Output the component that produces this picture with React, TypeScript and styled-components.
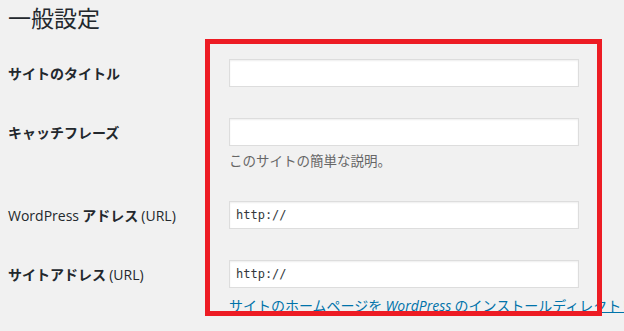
import React from "react";
import styled, { createGlobalStyle } from "styled-components";

const GlobalStyle = createGlobalStyle`
  html, body {
    margin: 0;
    padding: 0;
    background: #f1f1f1;
    overflow: hidden;
  }
  body {
    font-family: "Noto Sans CJK JP", "Noto Sans", sans-serif;
    color: #23282d;
  }
`

const Page = styled.div`
  position: relative;
  width: 624px;
  height: 331px;
  padding: 3px 0 0 8px;
  box-sizing: border-box;
  overflow: hidden;
`

const Title = styled.h1`
  margin: 0 0 12px;
  font-size: 23px;
  line-height: 29px;
  font-weight: 400;
  color: #23282d;
`

const Row = styled.div`
  display: flex;
  align-items: flex-start;
  padding: 15px 0 16px;
`

const Label = styled.label`
  width: 221px;
  flex: none;
  height: 28px;
  line-height: 28px;
  font-size: 14px;
  font-weight: 700;
  color: #23282d;
  white-space: nowrap;
`

const Latin = styled.span`
  font-family: "Open Sans", "Noto Sans", sans-serif;
  font-weight: 400;
`

const Field = styled.div`
  display: flex;
  flex-direction: column;
  align-items: flex-start;
`

const TextInput = styled.input<{ mono?: boolean }>`
  width: 350px;
  height: 28px;
  box-sizing: border-box;
  margin: 0;
  padding: 0 6px;
  border: 1px solid #ddd;
  box-shadow: inset 0 1px 2px rgba(0, 0, 0, 0.07);
  background: #fff;
  color: #32373c;
  font-size: ${p => p.mono ? 12 : 14}px;
  font-family: ${p => p.mono ? `"DejaVu Sans Mono", "Liberation Mono", monospace` : `"Noto Sans CJK JP", sans-serif`};
  outline: none;
`

const Description = styled.p<{ gap?: number; size?: number }>`
  margin: ${p => p.gap ?? 4}px 0 0;
  font-size: ${p => p.size ?? 13.5}px;
  line-height: 20px;
  color: #666;
  white-space: nowrap;
`

const Link = styled.a`
  color: #0073aa;
  text-decoration: underline;
  em {
    font-family: "Open Sans", "Noto Sans", sans-serif;
  }
`

const Highlight = styled.div`
  position: absolute;
  left: 205px;
  top: 39px;
  width: 397px;
  height: 277px;
  box-sizing: border-box;
  border: 5px solid #ed1c24;
  pointer-events: none;
`

export default function App() {
  return <>
    <GlobalStyle/>
    <Page>
      <Title>一般設定</Title>
      <Row>
        <Label>サイトのタイトル</Label>
        <Field><TextInput type="text" defaultValue=""/></Field>
      </Row>
      <Row>
        <Label>キャッチフレーズ</Label>
        <Field>
          <TextInput type="text" defaultValue=""/>
          <Description>このサイトの簡単な説明。</Description>
        </Field>
      </Row>
      <Row>
        <Label><Latin>WordPress</Latin> アドレス <Latin>(URL)</Latin></Label>
        <Field><TextInput mono type="text" defaultValue="http://"/></Field>
      </Row>
      <Row>
        <Label>サイトアドレス <Latin>(URL)</Latin></Label>
        <Field>
          <TextInput mono type="text" defaultValue="http://"/>
          <Description gap={7} size={14}>
            <Link href="#">サイトのホームページを <em>WordPress</em> のインストールディレクトリとは異なる場所にする場合は、ここに入力してください。</Link>
          </Description>
        </Field>
      </Row>
      <Highlight/>
    </Page>
  </>
}
